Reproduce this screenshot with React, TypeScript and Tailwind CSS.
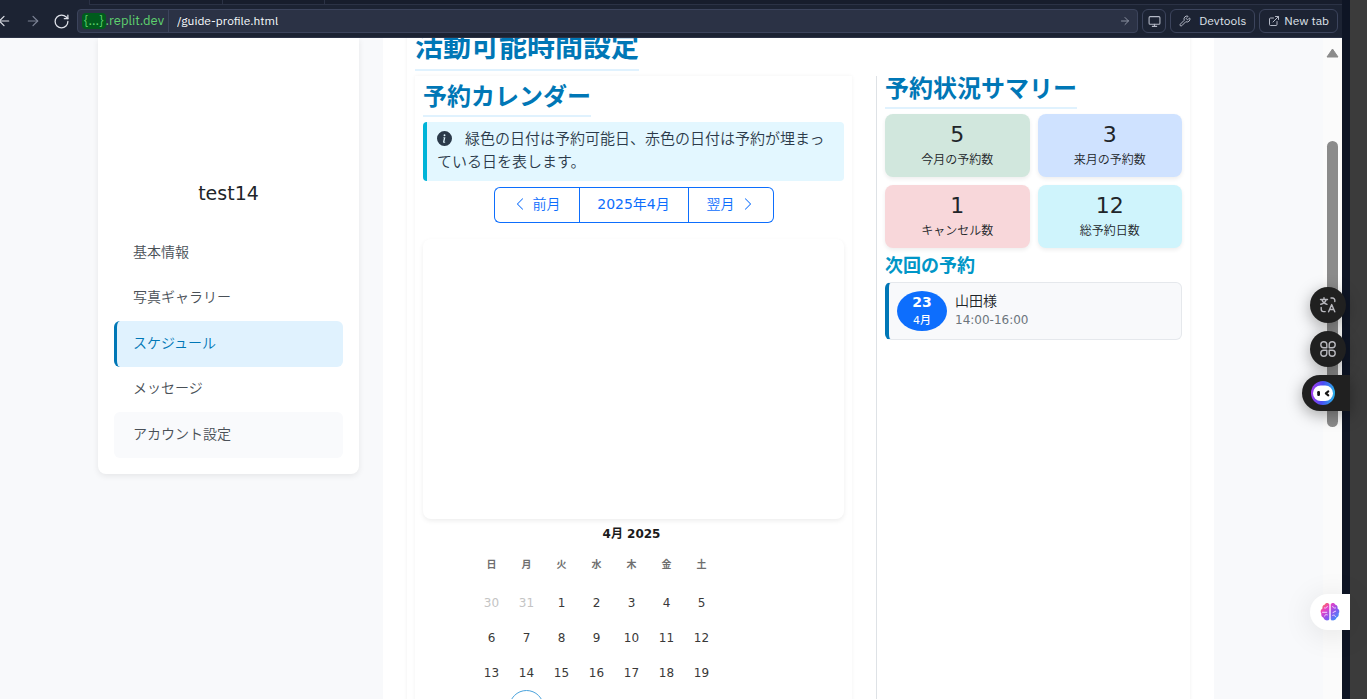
import React from 'react';
import { ArrowLeft, ArrowRight, ExternalLink, Monitor, RotateCw, Wrench } from 'lucide-react';
import { BsChevronLeft, BsChevronRight, BsInfoCircleFill } from 'react-icons/bs';

const menu = ['基本情報', '写真ギャラリー', 'スケジュール', 'メッセージ', 'アカウント設定'];

const stats = [
  { value: 5, label: '今月の予約数', tone: 'bg-[#d1e7dd]' },
  { value: 3, label: '来月の予約数', tone: 'bg-[#cfe2ff]' },
  { value: 1, label: 'キャンセル数', tone: 'bg-[#f8d7da]' },
  { value: 12, label: '総予約日数', tone: 'bg-[#cff4fc]' },
];

const weekdays = ['日', '月', '火', '水', '木', '金', '土'];
const weeks = [
  [30, 31, 1, 2, 3, 4, 5],
  [6, 7, 8, 9, 10, 11, 12],
  [13, 14, 15, 16, 17, 18, 19],
];

function Toolbar() {
  return (
    <header className="shrink-0 border-b border-[#2b3245] bg-[#1c2333] font-['IBM_Plex_Sans','Noto_Sans',sans-serif] text-[12px] font-normal text-[#dfe2ea]">
      <div className="flex h-[5px] pl-[89px]">
        <div className="w-[133px] border-b border-l border-[#2b3245] bg-[#171d2c]" />
        <div className="w-[102px] border-b border-l border-[#2b3245] bg-[#171d2c]" />
        <div className="flex-1 border-b border-l border-[#2b3245] bg-[#171d2c]" />
      </div>
      <div className="flex h-8 items-center pr-1">
        <button aria-label="戻る" className="-ml-1 w-[19px]">
          <ArrowLeft size={16} strokeWidth={1.8} />
        </button>
        <button aria-label="進む" className="ml-2.5 w-[18px] text-[#7d8496]">
          <ArrowRight size={16} strokeWidth={1.8} />
        </button>
        <button aria-label="再読み込み" className="ml-2.5 w-6">
          <RotateCw size={17} strokeWidth={1.8} />
        </button>
        <div className="flex h-6 flex-1 items-center rounded border border-[#3c445c] bg-[#2b3245]">
          <button className="flex h-full items-center border-r border-[#3c445c] px-1 text-[13px] text-[#5fd16f]">
            <span className="rounded bg-[#005c1c] px-0.5 leading-4">{'{...}'}</span>.replit.dev
          </button>
          <input
            aria-label="アドレス"
            defaultValue="/guide-profile.html"
            className="min-w-0 flex-1 bg-transparent px-2 text-[12px] text-[#f5f9fc] outline-none"
          />
          <button aria-label="移動" className="px-1.5 text-[#8d93a3]">
            <ArrowRight size={12} />
          </button>
        </div>
        <button aria-label="表示サイズ" className="ml-1 flex h-6 w-6 items-center justify-center rounded-md border border-[#3c445c] text-[#b4b9c6]">
          <Monitor size={13} />
        </button>
        <button className="ml-1 flex h-6 items-center gap-2 rounded-md border border-[#3c445c] px-2">
          <Wrench size={12} className="text-[#b4b9c6]" />
          Devtools
        </button>
        <button className="ml-1 flex h-6 items-center gap-1 rounded-md border border-[#3c445c] px-2">
          <ExternalLink size={12} className="text-[#b4b9c6]" />
          New tab
        </button>
      </div>
    </header>
  );
}

function Sidebar() {
  return (
    <aside className="w-[261px] shrink-0 self-start rounded-b-lg bg-white px-4 pb-4 shadow-[0_2px_6px_rgba(0,0,0,0.08)]">
      <h5 className="pt-[141px] text-center text-[19px] font-normal leading-7 text-[#212529]">test14</h5>
      <nav className="mt-6 text-[14px] text-[#495057]">
        {menu.map((item) => (
          <a
            key={item}
            href="#"
            className={
              item === 'スケジュール'
                ? 'flex h-[46px] items-center rounded-md border-l-[3px] border-[#0077b6] bg-[#e0f2fe] pb-0.5 pl-4 text-[#0077b6]'
                : item === 'アカウント設定'
                  ? 'flex h-[46px] items-center rounded-md border-l-[3px] border-transparent bg-[#f9fafc] pb-0.5 pl-4'
                  : 'flex h-[45px] items-center border-l-[3px] border-transparent pb-0.5 pl-4'
            }
          >
            {item}
          </a>
        ))}
      </nav>
    </aside>
  );
}

function Calendar() {
  return (
    <div className="ml-[51px] mt-1 text-[12px] font-normal text-[#393939]">
      <div className="w-[315px] text-center font-bold leading-[22px] text-[#1b1b1b]">4月 2025</div>
      <table className="w-[245px] table-fixed border-collapse">
        <thead>
          <tr className="h-10 text-[10px] text-[#6f6f6f]">
            {weekdays.map((d) => (
              <th key={d} className="p-0 pb-0.5">
                {d}
              </th>
            ))}
          </tr>
        </thead>
        <tbody>
          {weeks.map((week, row) => (
            <tr key={row} className="h-[35px]">
              {week.map((day) => (
                <td key={day} className={row === 0 && day > 7 ? 'p-0 text-center text-[#c4c4c4]' : 'p-0 text-center'}>
                  {day}
                </td>
              ))}
            </tr>
          ))}
          <tr className="h-[35px]">
            <td />
            <td className="p-0">
              <span className="mx-auto block h-[35px] w-[35px] rounded-full border border-[#4ba3dc]" />
            </td>
          </tr>
        </tbody>
      </table>
    </div>
  );
}

function CalendarPane() {
  return (
    <section className="min-w-0 flex-1 px-2 pt-1 shadow-[0_0_4px_rgba(0,0,0,0.05)]">
      <h3 className="w-fit border-b-2 border-[#e0f2fe] pb-px text-[24px] font-bold leading-[34px] text-[#0077b6]">
        予約カレンダー
      </h3>
      <p className="mt-[5px] rounded border-l-4 border-[#00b4d8] bg-[#e3f7ff] pb-[7px] pl-2.5 pr-2 pt-1.5 text-[15px] leading-[23px] text-[#2b3a4a]">
        <BsInfoCircleFill className="mr-[13px] inline h-[15px] w-[15px] align-[-2px]" />
        緑色の日付は予約可能日、赤色の日付は予約が埋まっている日を表します。
      </p>
      <div className="mt-1.5 flex justify-center text-[14px] text-[#0d6efd]">
        <button className="flex h-9 w-[85px] items-center justify-center gap-1.5 rounded-l-md border border-r-0 border-[#0d6efd] pb-0.5">
          <BsChevronLeft size={14} />
          前月
        </button>
        <button className="h-9 w-[110px] border border-[#0d6efd] pb-0.5 font-normal">2025年4月</button>
        <button className="flex h-9 w-[85px] items-center justify-center gap-1.5 rounded-r-md border border-l-0 border-[#0d6efd] pb-0.5">
          翌月
          <BsChevronRight size={14} />
        </button>
      </div>
      <div className="mt-4 h-[280px] rounded-lg bg-white shadow-[0_2px_5px_rgba(0,0,0,0.07)]" />
      <Calendar />
    </section>
  );
}

function SummaryPane() {
  return (
    <section className="w-[306px] shrink-0 border-l border-[#dee2e6] pl-2">
      <h3 className="-mt-1 w-fit border-b-2 border-[#e0f2fe] pb-px text-[24px] font-bold leading-[34px] text-[#0077b6]">
        予約状況サマリー
      </h3>
      <div className="mt-[5px] grid grid-cols-2 gap-2">
        {stats.map((s) => (
          <div key={s.label} className={`${s.tone} flex h-[63px] flex-col items-center rounded-lg pt-[7px] text-[#212529] shadow-[0_2px_4px_rgba(0,0,0,0.07)]`}>
            <span className="text-[22px] font-normal leading-7">{s.value}</span>
            <span className="text-[12px] leading-[22px]">{s.label}</span>
          </div>
        ))}
      </div>
      <h5 className="mt-[5px] text-[18px] font-bold leading-[26px] text-[#0096c7]">次回の予約</h5>
      <article className="mt-[3px] flex h-[58px] items-center rounded-md border border-l-4 border-[#e5e8ec] border-l-[#0077b6] bg-[#f8f9fb] pl-2">
        <div className="flex h-10 w-[50px] flex-col items-center justify-center rounded-[50%] bg-[#0d6efd] text-white">
          <span className="text-[14px] font-bold leading-5">23</span>
          <span className="text-[11px] font-medium leading-[18px]">4月</span>
        </div>
        <div className="ml-2 pb-0.5">
          <div className="text-[14px] leading-5 text-[#212529]">山田様</div>
          <div className="text-[12px] font-normal leading-[18px] text-[#6c757d]">14:00-16:00</div>
        </div>
      </article>
    </section>
  );
}

function FloatingTools() {
  return (
    <>
      <button
        aria-label="翻訳"
        className="absolute right-[21px] top-[287px] flex h-9 w-9 items-center justify-center rounded-full bg-[#202020] shadow-[0_4px_16px_rgba(0,0,0,0.35)]"
      >
        <svg width="18" height="18" viewBox="0 0 18 18" fill="none" stroke="#b8b8be" strokeWidth="1.4" strokeLinecap="round" strokeLinejoin="round">
          <path d="M1.5 3.500h7M5 1.800v1.700M2.800 3.500c.6 2 2.600 4 5.200 4.800M7.200 3.500C6.600 5.800 4.500 7.600 1.800 8.300" />
          <path d="M12 2h1.500a2.300 2.300 0 0 1 2.300 2.300v1.200M2.200 11.500v1.800a2.300 2.300 0 0 0 2.300 2.300H6.200" />
          <path d="M9.600 15.800 12.700 8.600l3.100 7.200M10.700 13.500h4" />
        </svg>
      </button>
      <button
        aria-label="ツール"
        className="absolute right-[21px] top-[331px] flex h-9 w-9 items-center justify-center rounded-full bg-[#202020] shadow-[0_4px_16px_rgba(0,0,0,0.35)]"
      >
        <svg width="18" height="18" viewBox="0 0 18 18" fill="none" stroke="#b8b8be" strokeWidth="1.4" strokeLinejoin="round">
          <path d="M7.800 7.800H4.800a3 3 0 1 1 3-3zM10.200 7.800V4.800a3 3 0 1 1 3 3zM7.800 10.200v3a3 3 0 1 1-3-3zM10.200 10.200h3a3 3 0 1 1-3 3z" />
        </svg>
      </button>
      <button
        aria-label="アシスタント"
        className="absolute right-[17px] top-[375px] flex h-9 w-12 items-center rounded-l-full bg-[#202020] pl-[9px] shadow-[0_4px_16px_rgba(0,0,0,0.35)]"
      >
        <svg width="24" height="24" viewBox="0 0 24 24">
          <defs>
            <linearGradient id="ring" x1="0" y1=".6" x2="1" y2=".7">
              <stop offset="0" stopColor="#a23df0" />
              <stop offset=".45" stopColor="#4a4cf5" />
              <stop offset="1" stopColor="#25b5e8" />
            </linearGradient>
          </defs>
          <circle cx="12" cy="12" r="12" fill="url(#ring)" />
          <rect x="2" y="4.500" width="20" height="15.500" rx="7.700" fill="#fff" />
          <rect x="6.200" y="10" width="2.800" height="5" rx="1.200" fill="#161616" />
          <path d="M17.300 10.400 14.800 12.400l2.500 2" fill="none" stroke="#161616" strokeWidth="2" strokeLinecap="round" strokeLinejoin="round" />
        </svg>
      </button>
      <button
        aria-label="AI"
        className="absolute right-[17px] top-[594px] flex h-9 w-10 items-center rounded-l-full bg-white pl-2.5 shadow-[0_4px_30px_rgba(0,0,0,0.1)]"
      >
        <svg width="20" height="20" viewBox="0 0 20 20">
          <defs>
            <linearGradient id="brain" x1="0" y1="0" x2="1" y2="1">
              <stop offset="0" stopColor="#ff8a2a" />
              <stop offset=".3" stopColor="#ea3fc4" />
              <stop offset=".6" stopColor="#8a55ee" />
              <stop offset="1" stopColor="#20a8ff" />
            </linearGradient>
          </defs>
          <path
            d="M9.300 2.500C8.800.6 5.500.4 4.600 2.700 2.600 3 2 5 2.600 6.300.4 7.500.2 10.300 1.300 11.600.9 13.700 2 15.300 3.500 15.700 4.300 18.700 8.300 19.300 9.300 17.300zM10.700 2.500c.5-1.900 3.800-2.100 4.700.2 2 .3 2.600 2.300 2 3.600 2.200 1.200 2.400 4 1.300 5.300.4 2.100-.7 3.700-2.200 4.100-.8 3-4.800 3.600-5.800 1.600z"
            fill="url(#brain)"
          />
          <path
            d="M4.500 6c1.500.4 2.600-.3 2.800-1.500M2.500 10.300h4.300M4.600 14c.2-1.200 1.300-1.700 2.700-1.200M15.500 6c-1.500.4-2.600-.3-2.800-1.500M13 10.500l2.600-1.300M15.400 14.500c-.2-1.200-1.300-1.700-2.700-1.200"
            fill="none"
            stroke="#f6d4ff"
            strokeWidth="1"
            strokeLinecap="round"
          />
        </svg>
      </button>
    </>
  );
}

export default function App() {
  return (
    <div className="relative flex h-screen overflow-hidden bg-[#3b3b3b] font-['DejaVu_Sans','Noto_Sans_CJK_JP',sans-serif] font-[350]">
      <div className="flex min-w-0 flex-1 flex-col bg-[#0e1525]">
        <div className="mr-2 flex min-h-0 flex-1 flex-col">
          <Toolbar />
          <div className="flex min-h-0 flex-1">
            <div className="min-w-0 flex-1 overflow-hidden bg-[#f8f9fb] pr-[11px]">
              <div className="mx-auto flex h-full max-w-[1140px] gap-6 px-3">
                <Sidebar />
                <main className="min-w-0 flex-1 bg-white px-6">
                  <div className="h-[110%] px-2 shadow-[0_0_4px_rgba(0,0,0,0.06)]">
                    <h2 className="-mt-2 w-fit border-b-2 border-[#e0f2fe] pb-[3px] text-[28px] font-bold leading-9 text-[#0077b6]">
                      活動可能時間設定
                    </h2>
                    <div className="mt-[5px] flex gap-6">
                      <CalendarPane />
                      <SummaryPane />
                    </div>
                  </div>
                </main>
              </div>
            </div>
            <div className="flex w-[19px] shrink-0 flex-col items-center bg-[#fbfbfb] pt-2.5">
              <svg width="13" height="10" viewBox="0 0 13 10" aria-hidden="true">
                <path d="M6.500 1 12 9H1z" fill="#8b8b8b" stroke="#8b8b8b" strokeLinejoin="round" />
              </svg>
              <div className="mt-[83px] h-[286px] w-[11px] rounded-full bg-[#8b8b8b]" />
            </div>
          </div>
        </div>
      </div>
      <div className="w-[17px] shrink-0" />
      <FloatingTools />
    </div>
  );
}
